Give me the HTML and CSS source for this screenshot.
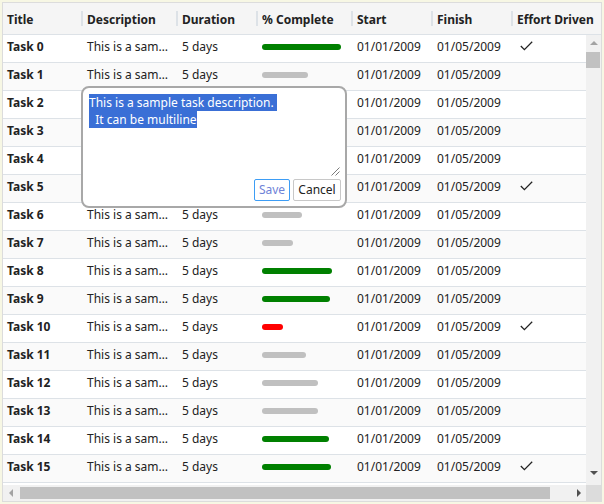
FILE: index.html
```html
<!DOCTYPE html>
<html>
<head>
<meta charset="utf-8">
<link rel="stylesheet" href="styles.css">
</head>
<body>
<div class="grid">
  <div class="header">
    <div class="hcell w80">Title</div>
    <div class="hcell w95">Description</div>
    <div class="hcell w80">Duration</div>
    <div class="hcell w95">% Complete</div>
    <div class="hcell w80">Start</div>
    <div class="hcell w80">Finish</div>
    <div class="hcell w88 last">Effort Driven</div>
  </div>
  <div class="body">
    <div class="viewport">
      <div class="row"><div class="cell w80 title">Task 0</div><div class="cell w95">This is a sample task description.</div><div class="cell w80">5 days</div><div class="cell w95"><span class="bar g" style="width:79px"></span></div><div class="cell w80">01/01/2009</div><div class="cell w80">01/05/2009</div><div class="cell w80 check"><svg width="13" height="10" viewBox="0 0 13 10"><polyline points="0.8,5 4.4,8.6 12.2,0.8" fill="none" stroke="#222" stroke-width="1.3"/></svg></div></div>
      <div class="row odd"><div class="cell w80 title">Task 1</div><div class="cell w95">This is a sample task description.</div><div class="cell w80">5 days</div><div class="cell w95"><span class="bar s" style="width:46px"></span></div><div class="cell w80">01/01/2009</div><div class="cell w80">01/05/2009</div><div class="cell w80 check"></div></div>
      <div class="row"><div class="cell w80 title">Task 2</div><div class="cell w95">This is a sample task description.</div><div class="cell w80">5 days</div><div class="cell w95"><span class="bar s" style="width:60px"></span></div><div class="cell w80">01/01/2009</div><div class="cell w80">01/05/2009</div><div class="cell w80 check"></div></div>
      <div class="row odd"><div class="cell w80 title">Task 3</div><div class="cell w95">This is a sample task description.</div><div class="cell w80">5 days</div><div class="cell w95"><span class="bar r" style="width:25px"></span></div><div class="cell w80">01/01/2009</div><div class="cell w80">01/05/2009</div><div class="cell w80 check"></div></div>
      <div class="row"><div class="cell w80 title">Task 4</div><div class="cell w95">This is a sample task description.</div><div class="cell w80">5 days</div><div class="cell w95"><span class="bar s" style="width:50px"></span></div><div class="cell w80">01/01/2009</div><div class="cell w80">01/05/2009</div><div class="cell w80 check"></div></div>
      <div class="row odd"><div class="cell w80 title">Task 5</div><div class="cell w95">This is a sample task description.</div><div class="cell w80">5 days</div><div class="cell w95"><span class="bar g" style="width:75px"></span></div><div class="cell w80">01/01/2009</div><div class="cell w80">01/05/2009</div><div class="cell w80 check"><svg width="13" height="10" viewBox="0 0 13 10"><polyline points="0.8,5 4.4,8.6 12.2,0.8" fill="none" stroke="#222" stroke-width="1.3"/></svg></div></div>
      <div class="row"><div class="cell w80 title">Task 6</div><div class="cell w95">This is a sample task description.</div><div class="cell w80">5 days</div><div class="cell w95"><span class="bar s" style="width:40px"></span></div><div class="cell w80">01/01/2009</div><div class="cell w80">01/05/2009</div><div class="cell w80 check"></div></div>
      <div class="row odd"><div class="cell w80 title">Task 7</div><div class="cell w95">This is a sample task description.</div><div class="cell w80">5 days</div><div class="cell w95"><span class="bar s" style="width:31px"></span></div><div class="cell w80">01/01/2009</div><div class="cell w80">01/05/2009</div><div class="cell w80 check"></div></div>
      <div class="row"><div class="cell w80 title">Task 8</div><div class="cell w95">This is a sample task description.</div><div class="cell w80">5 days</div><div class="cell w95"><span class="bar g" style="width:70px"></span></div><div class="cell w80">01/01/2009</div><div class="cell w80">01/05/2009</div><div class="cell w80 check"></div></div>
      <div class="row odd"><div class="cell w80 title">Task 9</div><div class="cell w95">This is a sample task description.</div><div class="cell w80">5 days</div><div class="cell w95"><span class="bar g" style="width:68px"></span></div><div class="cell w80">01/01/2009</div><div class="cell w80">01/05/2009</div><div class="cell w80 check"></div></div>
      <div class="row"><div class="cell w80 title">Task 10</div><div class="cell w95">This is a sample task description.</div><div class="cell w80">5 days</div><div class="cell w95"><span class="bar r" style="width:21px"></span></div><div class="cell w80">01/01/2009</div><div class="cell w80">01/05/2009</div><div class="cell w80 check"><svg width="13" height="10" viewBox="0 0 13 10"><polyline points="0.8,5 4.4,8.6 12.2,0.8" fill="none" stroke="#222" stroke-width="1.3"/></svg></div></div>
      <div class="row odd"><div class="cell w80 title">Task 11</div><div class="cell w95">This is a sample task description.</div><div class="cell w80">5 days</div><div class="cell w95"><span class="bar s" style="width:44px"></span></div><div class="cell w80">01/01/2009</div><div class="cell w80">01/05/2009</div><div class="cell w80 check"></div></div>
      <div class="row"><div class="cell w80 title">Task 12</div><div class="cell w95">This is a sample task description.</div><div class="cell w80">5 days</div><div class="cell w95"><span class="bar s" style="width:56px"></span></div><div class="cell w80">01/01/2009</div><div class="cell w80">01/05/2009</div><div class="cell w80 check"></div></div>
      <div class="row odd"><div class="cell w80 title">Task 13</div><div class="cell w95">This is a sample task description.</div><div class="cell w80">5 days</div><div class="cell w95"><span class="bar s" style="width:56px"></span></div><div class="cell w80">01/01/2009</div><div class="cell w80">01/05/2009</div><div class="cell w80 check"></div></div>
      <div class="row"><div class="cell w80 title">Task 14</div><div class="cell w95">This is a sample task description.</div><div class="cell w80">5 days</div><div class="cell w95"><span class="bar g" style="width:67px"></span></div><div class="cell w80">01/01/2009</div><div class="cell w80">01/05/2009</div><div class="cell w80 check"></div></div>
      <div class="row odd"><div class="cell w80 title">Task 15</div><div class="cell w95">This is a sample task description.</div><div class="cell w80">5 days</div><div class="cell w95"><span class="bar g" style="width:69px"></span></div><div class="cell w80">01/01/2009</div><div class="cell w80">01/05/2009</div><div class="cell w80 check"><svg width="13" height="10" viewBox="0 0 13 10"><polyline points="0.8,5 4.4,8.6 12.2,0.8" fill="none" stroke="#222" stroke-width="1.3"/></svg></div></div>
    </div>
    <div class="vscroll">
      <div class="sbtn"><span class="tri up"></span></div>
      <div class="vthumb"></div>
      <div class="fill"></div>
      <div class="sbtn"><span class="tri down"></span></div>
    </div>
  </div>
  <div class="hbar">
    <div class="htrack">
      <div class="sbtn"><span class="tri left"></span></div>
      <div class="hthumb"></div>
      <div class="fill"></div>
      <div class="sbtn"><span class="tri right"></span></div>
    </div>
    <div class="corner"></div>
  </div>
  <div class="editor">
    <div class="ta"><span class="sel">This is a sample task description. </span>
<span class="sel">  It can be multiline</span><svg class="grip" width="9" height="9" viewBox="0 0 9 9"><line x1="8.5" y1="0.5" x2="0.5" y2="8.5" stroke="#7a7a7a" stroke-width="1"/><line x1="8.5" y1="4.5" x2="4.5" y2="8.5" stroke="#7a7a7a" stroke-width="1"/></svg></div>
    <div class="btns">
      <button class="btn save">Save</button>
      <button class="btn cancel">Cancel</button>
    </div>
  </div>
</div>
</body>
</html>
```

FILE: styles.css
```css
body {
  margin: 0;
  background: #f7f7e4;
  font-family: "Noto Sans", "Open Sans", sans-serif;
  font-size: 12px;
  color: #222;
}

.grid {
  margin: 2px;
  width: 600px;
  height: 500px;
  box-sizing: border-box;
  border: 1px solid #dcdcdc;
  position: relative;
  background: #fff;
  display: flex;
  flex-direction: column;
  overflow: hidden;
}

.header {
  display: flex;
  flex: none;
  height: 32px;
  box-sizing: border-box;
  background: #f5f5f5;
  border-bottom: 1px solid #dde2e7;
}

.hcell {
  position: relative;
  flex: none;
  box-sizing: border-box;
  padding: 6px 4px 0;
  line-height: 22px;
  font-weight: 700;
  white-space: nowrap;
}

.hcell::after {
  content: "";
  position: absolute;
  right: 0;
  top: 8px;
  width: 2px;
  height: 15px;
  background: #dde2e7;
}

.hcell.last::after { display: none; }

.w80 { width: 80px; }
.w88 { width: 88px; }
.w95 { width: 95px; }

.body {
  display: flex;
  flex: none;
  height: 450px;
}

.viewport {
  width: 583px;
  overflow: hidden;
  background: #fff;
}

.row {
  display: flex;
  width: 590px;
  height: 28px;
  box-sizing: border-box;
  border-bottom: 1px solid #dde2e7;
  background: #fff;
}

.row.odd { background: #fafafa; }

.cell {
  flex: none;
  box-sizing: border-box;
  padding: 0 4px;
  line-height: 24px;
  white-space: nowrap;
  overflow: hidden;
  text-overflow: ellipsis;
}

.cell.title { font-weight: 700; }

.bar {
  display: block;
  height: 6px;
  border-radius: 3px;
  margin-top: 9px;
}

.bar.g { background: #008000; }
.bar.s { background: #c0c0c0; }
.bar.r { background: #ff0000; }

.check svg {
  display: block;
  margin: 6px 0 0 3px;
}

/* scrollbars */
.vscroll {
  width: 15px;
  flex: none;
  display: flex;
  flex-direction: column;
  background: #f1f1f1;
}

.sbtn {
  width: 15px;
  height: 15px;
  flex: none;
  display: flex;
  align-items: center;
  justify-content: center;
}

.vscroll .sbtn:last-child { margin-bottom: 5px; }

.vthumb {
  flex: none;
  height: 16px;
  margin: 2px 1px 0 0;
  background: #c1c1c1;
}

.fill { flex: 1; }

.tri {
  width: 0;
  height: 0;
  border-style: solid;
  border-color: transparent;
}

.tri.up { border-width: 0 4px 4px; border-bottom-color: #a3a3a3; }
.tri.down { border-width: 4px 4px 0; border-top-color: #505050; }
.tri.left { border-width: 4px 4px 4px 0; border-right-color: #a3a3a3; }
.tri.right { border-width: 4px 0 4px 4px; border-left-color: #505050; }

.hbar {
  display: flex;
  flex: none;
  height: 16px;
}

.htrack {
  width: 583px;
  display: flex;
  align-items: center;
  background: #f1f1f1;
}

.htrack .sbtn { height: 16px; }

.hthumb {
  flex: none;
  width: 530px;
  height: 12px;
  margin-left: 2px;
  background: #c1c1c1;
}

.corner {
  width: 15px;
  background: #dcdcdc;
}

/* long text editor */
.editor {
  position: absolute;
  left: 78px;
  top: 83px;
  width: 266px;
  height: 122px;
  box-sizing: border-box;
  border: 2px solid #a8a8a8;
  border-radius: 8px;
  background: #fff;
  padding: 6px 4px 0 6px;
}

.ta {
  position: relative;
  height: 83px;
  white-space: pre;
  line-height: 17px;
  color: #222;
}

.sel {
  background: #3a6fd6;
  color: #fff;
}

.grip {
  position: absolute;
  right: 1px;
  bottom: 1px;
}

.btns {
  display: flex;
  justify-content: flex-end;
  gap: 3px;
  margin-top: 2px;
}

.btn {
  height: 22px;
  box-sizing: border-box;
  padding: 0;
  border: 1px solid #c8c8c8;
  border-radius: 2px;
  background: #fff;
  font-family: "Noto Sans", "Open Sans", sans-serif;
  font-size: 12px;
  line-height: 20px;
  text-align: center;
}

.btn.save {
  width: 36px;
  border-color: #3d9df5;
  color: #6f83d8;
}

.btn.cancel {
  width: 48px;
  color: #222;
}
```
